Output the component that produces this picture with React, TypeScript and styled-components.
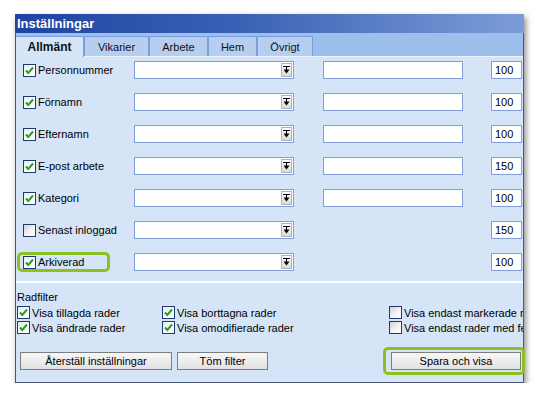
import React from "react";
import styled, { createGlobalStyle } from "styled-components";

const GlobalStyle = createGlobalStyle`
  html, body {
    margin: 0;
    padding: 0;
    background: #ffffff;
  }
  body {
    font-family: "Liberation Sans", Arial, sans-serif;
    font-size: 11px;
    color: #000000;
  }
`;

const Page = styled.div`
  padding: 14px 0 0 15px;
`;

const Window = styled.div`
  width: 509px;
  height: 369px;
  box-sizing: border-box;
  border: 1px solid #4b5670;
  border-top: none;
  background: #d5e4f7;
  box-shadow: 2px 3px 6px rgba(0, 0, 0, 0.45);
  display: flex;
  flex-direction: column;
`;

const TitleBar = styled.div`
  height: 19px;
  margin: 0 -1px;
  padding-left: 2px;
  background: linear-gradient(to right, #1f44a1 0%, #3b62b5 45%, #7d9dd8 100%);
  color: #ffffff;
  font-weight: bold;
  font-size: 13px;
  line-height: 19px;
`;

const TabBar = styled.div`
  height: 24px;
  box-sizing: border-box;
  background: #9cbfec;
  border-bottom: 1px solid #eef4fd;
  display: flex;
  align-items: flex-end;
`;

const Tab = styled.div<{ $active?: boolean; $w: number }>`
  width: ${(p) => p.$w}px;
  height: ${(p) => (p.$active ? 21 : 20)}px;
  margin-bottom: ${(p) => (p.$active ? -1 : 0)}px;
  box-sizing: border-box;
  border: 1px solid #7a9fd8;
  border-bottom: none;
  border-left: ${(p) => (p.$active ? "none" : "1px solid #7a9fd8")};
  background: ${(p) => (p.$active ? "#d5e4f7" : "#b6cff1")};
  display: flex;
  align-items: center;
  justify-content: center;
  font-size: ${(p) => (p.$active ? 12 : 11)}px;
  font-weight: ${(p) => (p.$active ? "bold" : "normal")};
  color: #111111;
`;

const Rows = styled.div`
  display: grid;
  grid-template-columns: 117px 189px 168px 31px;
  grid-auto-rows: 18px;
  row-gap: 14px;
  align-items: center;
  padding: 4px 0 10px 1px;
  border-bottom: 2px solid #ffffff;
`;

const LabelCell = styled.div<{ $highlight?: boolean }>`
  width: 93px;
  height: 20px;
  margin: -1px 0;
  box-sizing: border-box;
  border: 3px solid ${(p) => (p.$highlight ? "#8cc21e" : "transparent")};
  border-radius: 5px;
  padding-left: 3px;
  display: flex;
  align-items: center;
  gap: 2px;
  white-space: nowrap;
`;

const Box = styled.span<{ $checked?: boolean }>`
  width: 13px;
  height: 13px;
  box-sizing: border-box;
  border: 1px solid #1c3b6e;
  background: ${(p) =>
    p.$checked
      ? "linear-gradient(135deg, #e6e6e6 0%, #ffffff 60%)"
      : "linear-gradient(135deg, #d0d0d0 0%, #f4f4f4 55%, #ffffff 100%)"};
  display: inline-flex;
  align-items: center;
  justify-content: center;
  flex: none;
`;

const Select = styled.div`
  width: 160px;
  height: 18px;
  box-sizing: border-box;
  border: 1px solid #7f9fd6;
  background: #ffffff;
  padding: 1px;
  display: flex;
  justify-content: flex-end;
`;

const DropButton = styled.span`
  width: 11px;
  height: 14px;
  box-sizing: border-box;
  border: 1px solid #b3b3b3;
  background: linear-gradient(#ffffff, #d9d9d9);
  display: flex;
  align-items: center;
  justify-content: center;
`;

const Field = styled.div<{ $w: number }>`
  width: ${(p) => p.$w}px;
  height: 18px;
  box-sizing: border-box;
  border: 1px solid #7f9fd6;
  background: #ffffff;
  padding-left: 3px;
  line-height: 16px;
  font-size: 11px;
`;

const FilterSection = styled.div`
  padding: 7px 0 0 1px;
  display: flex;
  flex-direction: column;
`;

const FilterTitle = styled.div`
  line-height: 15px;
`;

const FilterGrid = styled.div`
  display: grid;
  grid-template-columns: 145px 227px 1fr;
  grid-auto-rows: 15px;
  overflow: hidden;
  white-space: nowrap;
`;

const CheckItem = styled.div`
  display: flex;
  align-items: center;
  gap: 2px;
`;

const ButtonRow = styled.div`
  display: flex;
  align-items: center;
  height: 28px;
  margin-top: 12px;
  padding-left: 3px;
  gap: 5px;
`;

const Button = styled.div<{ $w: number }>`
  width: ${(p) => p.$w}px;
  height: 18px;
  box-sizing: border-box;
  border: 1px solid #7d7d7d;
  background: linear-gradient(#f7f7f7, #e2e2e2);
  display: flex;
  align-items: center;
  justify-content: center;
  font-size: 11px;
`;

const Highlight = styled.div`
  margin-left: auto;
  margin-right: -2px;
  height: 28px;
  box-sizing: border-box;
  border: 3px solid #8cc21e;
  border-radius: 5px;
  padding: 0 1px 0 5px;
  display: flex;
  align-items: center;
`;

const Check = ({ checked }: { checked?: boolean }) => (
  <Box $checked={checked}>
    {checked && (
      <svg width="11" height="11" viewBox="0 0 11 11">
        <path d="M2 5.5 L4.3 8 L9 2.5" fill="none" stroke="#1fa21f" strokeWidth="2" />
      </svg>
    )}
  </Box>
);

const DropIcon = () => (
  <svg width="7" height="8" viewBox="0 0 7 8">
    <rect x="0" y="0" width="7" height="1" fill="#000" />
    <rect x="3" y="1" width="1" height="3" fill="#000" />
    <path d="M0.5 3.5 H6.5 L3.5 7.5 Z" fill="#000" />
  </svg>
);

const tabs = [
  { label: "Allmänt", w: 68 },
  { label: "Vikarier", w: 65 },
  { label: "Arbete", w: 59 },
  { label: "Hem", w: 49 },
  { label: "Övrigt", w: 56 },
];

const rows = [
  { label: "Personnummer", checked: true, text: true, width: "100" },
  { label: "Förnamn", checked: true, text: true, width: "100" },
  { label: "Efternamn", checked: true, text: true, width: "100" },
  { label: "E-post arbete", checked: true, text: true, width: "150" },
  { label: "Kategori", checked: true, text: true, width: "100" },
  { label: "Senast inloggad", checked: false, text: false, width: "150" },
  { label: "Arkiverad", checked: true, text: false, width: "100", highlight: true },
];

const filters = [
  { label: "Visa tillagda rader", checked: true },
  { label: "Visa borttagna rader", checked: true },
  { label: "Visa endast markerade rader", checked: false },
  { label: "Visa ändrade rader", checked: true },
  { label: "Visa omodifierade rader", checked: true },
  { label: "Visa endast rader med fel", checked: false },
];

export default function App() {
  return (
    <Page>
      <GlobalStyle />
      <Window>
        <TitleBar>Inställningar</TitleBar>
        <TabBar>
          {tabs.map((t, i) => (
            <Tab key={t.label} $w={t.w} $active={i === 0}>
              {t.label}
            </Tab>
          ))}
        </TabBar>
        <Rows>
          {rows.map((r) => (
            <React.Fragment key={r.label}>
              <LabelCell $highlight={r.highlight}>
                <Check checked={r.checked} />
                {r.label}
              </LabelCell>
              <Select>
                <DropButton>
                  <DropIcon />
                </DropButton>
              </Select>
              {r.text ? <Field $w={140} /> : <span />}
              <Field $w={31}>{r.width}</Field>
            </React.Fragment>
          ))}
        </Rows>
        <FilterSection>
          <FilterTitle>Radfilter</FilterTitle>
          <FilterGrid>
            {filters.map((f) => (
              <CheckItem key={f.label}>
                <Check checked={f.checked} />
                {f.label}
              </CheckItem>
            ))}
          </FilterGrid>
          <ButtonRow>
            <Button $w={152}>Återställ inställningar</Button>
            <Button $w={91}>Töm filter</Button>
            <Highlight>
              <Button $w={130}>Spara och visa</Button>
            </Highlight>
          </ButtonRow>
        </FilterSection>
      </Window>
    </Page>
  );
}
